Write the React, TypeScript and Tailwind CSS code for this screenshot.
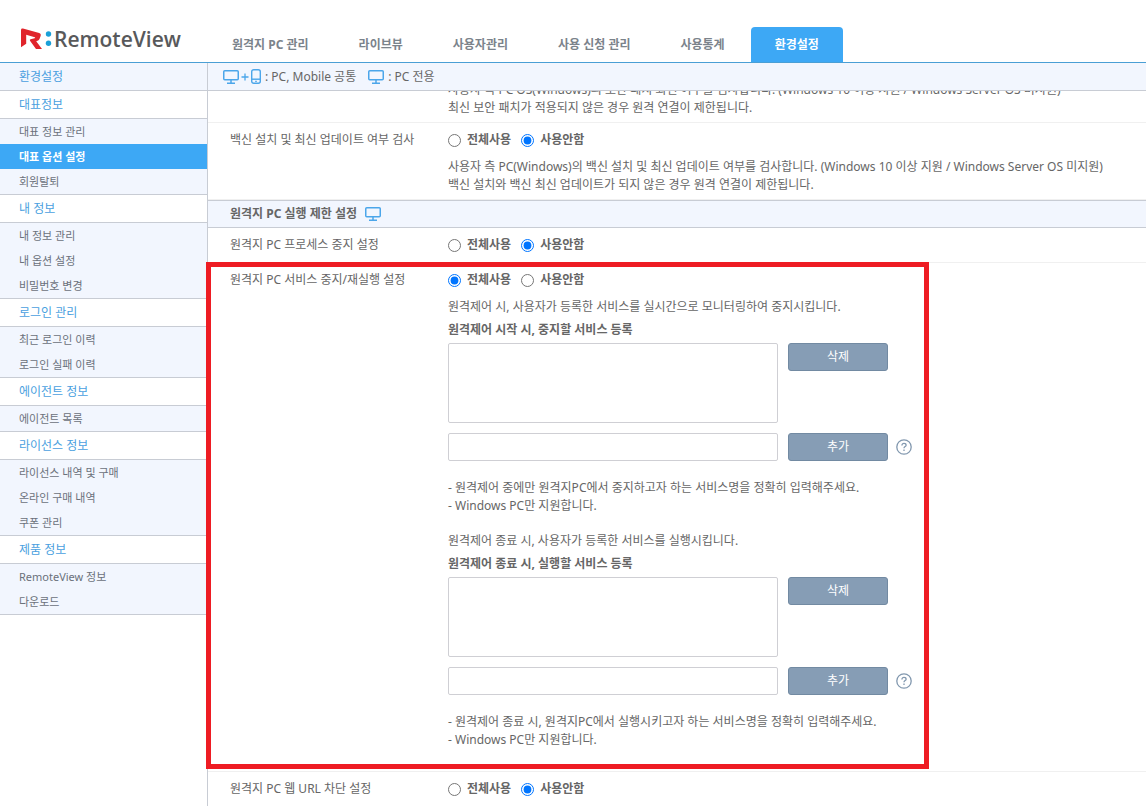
import { useState, type ReactNode } from 'react';

const navLinks = ['원격지 PC 관리', '라이브뷰', '사용자관리', '사용 신청 관리', '사용통계', '환경설정'];

const menuGroups = [
  { title: '대표정보', items: ['대표 정보 관리', '대표 옵션 설정', '회원탈퇴'] },
  { title: '내 정보', items: ['내 정보 관리', '내 옵션 설정', '비밀번호 변경'] },
  { title: '로그인 관리', items: ['최근 로그인 이력', '로그인 실패 이력'] },
  { title: '에이전트 정보', items: ['에이전트 목록'] },
  { title: '라이선스 정보', items: ['라이선스 내역 및 구매', '온라인 구매 내역', '쿠폰 관리'] },
  { title: '제품 정보', items: ['RemoteView 정보', '다운로드'] },
];

function PcIcon() {
  return (
    <svg width="16" height="14" viewBox="0 0 16 14" fill="none" stroke="#4ba6ea" strokeWidth="1.5" aria-hidden="true">
      <rect x="0.75" y="0.75" width="14.5" height="9" rx="1" />
      <path d="M8 10v3M4 13.2h8" />
    </svg>
  );
}

function MobileIcon() {
  return (
    <svg width="10" height="15" viewBox="0 0 10 15" fill="none" stroke="#4ba6ea" strokeWidth="1.4" aria-hidden="true">
      <rect x="0.7" y="0.7" width="8.6" height="13.6" rx="2" />
      <path d="M1 10.2h8" />
      <path d="M4 12.3h2" strokeWidth="1" />
    </svg>
  );
}

function Logo() {
  return (
    <a href="#home" className="flex items-center gap-0.5">
      <svg width="32" height="22" viewBox="0 0 32 22" aria-hidden="true">
        <path
          d="M1 19.3V2Q1 0.2 3 0.6L19.2 5Q21.4 5.8 20.7 7.8L19.5 11Q18.9 12.7 17 13.1L16.2 13.3L22 21H16L10 12.7Q9.4 11.5 10.6 11.2L14.6 10.3Q15.8 9.8 14.8 9.2L6.2 6.7V15.8Z"
          fill="#e0242b"
        />
        <circle cx="28.5" cy="6" r="2.7" fill="#1ba0d8" />
        <circle cx="28.5" cy="15.3" r="2.7" fill="#1ba0d8" />
      </svg>
      <span className="font-['Open_Sans'] text-[21px] leading-6 font-semibold text-[#58595b]">RemoteView</span>
    </a>
  );
}

function UseRadios({ name, initial }: { name: string; initial: 'all' | 'none' }) {
  const [value, setValue] = useState(initial);

  return (
    <div role="radiogroup" aria-label={name} className="flex items-center gap-2.5">
      <label className="flex items-center gap-1.5 font-bold text-[#666]">
        <input type="radio" name={name} checked={value === 'all'} onChange={() => setValue('all')} className="size-[13px]" />
        전체사용
      </label>
      <label className="flex items-center gap-1.5 font-bold text-[#666]">
        <input type="radio" name={name} checked={value === 'none'} onChange={() => setValue('none')} className="size-[13px]" />
        사용안함
      </label>
    </div>
  );
}

function SettingRow({ label, children }: { label: string; children: ReactNode }) {
  return (
    <div className="flex border-b border-[#f0f0f0] pl-[22px]">
      <div className="w-[218px] shrink-0 py-2">{label}</div>
      <div className="min-w-0 flex-1">{children}</div>
    </div>
  );
}

function ActionButton({ children }: { children: ReactNode }) {
  return (
    <button type="button" className="h-7 w-[100px] rounded-[3px] border border-[#728aa2] bg-[#869db5] text-white">
      {children}
    </button>
  );
}

function ServiceEditor({ id, intro, title, note }: { id: string; intro: string; title: string; note: string }) {
  return (
    <div>
      <p>{intro}</p>
      <label htmlFor={`${id}-list`} className="mt-[5px] mb-1 block font-bold text-[#666]">{title}</label>
      <div className="flex items-start gap-2.5">
        <textarea id={`${id}-list`} readOnly className="block h-20 w-[330px] resize-none rounded-xs border border-[#cfcfd4] bg-white" />
        <ActionButton>삭제</ActionButton>
      </div>
      <div className="mt-2.5 flex items-center">
        <input type="text" aria-label={title} className="mr-2.5 h-7 w-[330px] rounded-xs border border-[#cfcfd4] bg-white px-2" />
        <ActionButton>추가</ActionButton>
        <button type="button" aria-label="도움말" className="ml-2">
          <svg width="16" height="16" viewBox="0 0 16 16" fill="none" stroke="#8298af" strokeWidth="1.3" aria-hidden="true">
            <circle cx="8" cy="8" r="7.2" />
            <path d="M5.9 6.5C5.9 5 6.8 4.4 8 4.4s2.1.7 2.1 1.8C10.1 7.6 8 7.6 8 9.3" />
            <path d="M8 10.6v1.4" />
          </svg>
        </button>
      </div>
      <p className="mt-[18px]">
        {note}
        <br />- Windows PC만 지원합니다.
      </p>
    </div>
  );
}

export default function App() {
  return (
    <div className="flex h-screen flex-col overflow-hidden bg-white font-['Noto_Sans','Noto_Sans_CJK_KR',sans-serif] text-xs leading-[18px] text-[#666]">
      <header className="flex h-[63px] shrink-0 items-end border-b border-[#4a9fd5]">
        <div className="w-52 shrink-0 pb-[11px] pl-5">
          <Logo />
        </div>
        <nav className="flex gap-0.5">
          {navLinks.map((link) => (
            <a
              key={link}
              href="#menu"
              className={`flex h-[35px] items-center rounded-t px-6 font-bold whitespace-nowrap ${
                link === '환경설정' ? 'bg-[#3da8f5] text-white' : 'text-[#7b838b]'
              }`}
            >
              {link}
            </a>
          ))}
        </nav>
      </header>

      <div className="flex min-h-0 flex-1">
        <aside className="w-52 shrink-0 border-r border-[#c8ccd4]">
          <h1 className="flex h-7 items-center border-b border-[#c8ccd4] bg-[#f2f6fe] pl-[19px] text-[#4a9fe0]">환경설정</h1>
          {menuGroups.map((group) => (
            <section key={group.title}>
              <h2 className="flex h-7 items-center border-b border-[#c8ccd4] pl-[19px] text-[#4a9fe0]">{group.title}</h2>
              <ul className="border-b border-[#c8ccd4] bg-[#f2f6fe]">
                {group.items.map((item) => (
                  <li key={item}>
                    <a
                      href="#settings"
                      className={`flex h-[25px] items-center pl-[19px] text-[11px] ${
                        item === '대표 옵션 설정' ? 'bg-[#3da8f5] font-bold text-white' : 'text-[#6b717b]'
                      }`}
                    >
                      {item}
                    </a>
                  </li>
                ))}
              </ul>
            </section>
          ))}
        </aside>

        <main className="min-w-0 flex-1">
          <div className="flex h-7 items-center border-b border-[#c8ccd4] bg-[#f2f6fe] pl-[15px]">
            <PcIcon />
            <svg width="8" height="8" viewBox="0 0 8 8" stroke="#4ba6ea" strokeWidth="1.3" className="mx-0.5" aria-hidden="true">
              <path d="M4 0.5v7M0.5 4h7" />
            </svg>
            <MobileIcon />
            <span className="mr-3 ml-1">: PC, Mobile 공통</span>
            <PcIcon />
            <span className="ml-1">: PC 전용</span>
          </div>

          {/* tail of the row that is scrolled under the toolbar */}
          <div className="flex h-8 flex-col justify-end overflow-hidden border-b border-[#f0f0f0] pb-[5px] pl-60">
            <p>
              사용자 측 PC OS(Windows)의 보안 패치 최신 여부를 검사합니다. (Windows 10 이상 지원 / Windows Server OS 미지원)
              <br />
              최신 보안 패치가 적용되지 않은 경우 원격 연결이 제한됩니다.
            </p>
          </div>

          <SettingRow label="백신 설치 및 최신 업데이트 여부 검사">
            <div className="space-y-[9px] pt-2 pb-[5px]">
              <UseRadios name="vaccine" initial="none" />
              <p>
                사용자 측 PC(Windows)의 백신 설치 및 최신 업데이트 여부를 검사합니다. (Windows 10 이상 지원 / Windows Server OS 미지원)
                <br />
                백신 설치와 백신 최신 업데이트가 되지 않은 경우 원격 연결이 제한됩니다.
              </p>
            </div>
          </SettingRow>

          <h3 className="flex h-7 items-center gap-2 border-y border-[#c8ccd4] bg-[#f2f6fe] pl-[22px] font-bold">
            원격지 PC 실행 제한 설정
            <PcIcon />
          </h3>

          <SettingRow label="원격지 PC 프로세스 중지 설정">
            <div className="py-2">
              <UseRadios name="process" initial="none" />
            </div>
          </SettingRow>

          <div className="relative">
            <SettingRow label="원격지 PC 서비스 중지/재실행 설정">
              <div className="pt-2 pb-[22px]">
                <UseRadios name="service" initial="all" />
                <div className="mt-[9px] space-y-[17px]">
                  <ServiceEditor
                    id="stop"
                    intro="원격제어 시, 사용자가 등록한 서비스를 실시간으로 모니터링하여 중지시킵니다."
                    title="원격제어 시작 시, 중지할 서비스 등록"
                    note="- 원격제어 중에만 원격지PC에서 중지하고자 하는 서비스명을 정확히 입력해주세요."
                  />
                  <ServiceEditor
                    id="run"
                    intro="원격제어 종료 시, 사용자가 등록한 서비스를 실행시킵니다."
                    title="원격제어 종료 시, 실행할 서비스 등록"
                    note="- 원격제어 종료 시, 원격지PC에서 실행시키고자 하는 서비스명을 정확히 입력해주세요."
                  />
                </div>
              </div>
            </SettingRow>
            <div className="pointer-events-none absolute -top-px bottom-[3px] -left-0.5 w-[723px] border-5 border-[#ee1c23]" />
          </div>

          <SettingRow label="원격지 PC 웹 URL 차단 설정">
            <div className="py-2">
              <UseRadios name="url" initial="none" />
            </div>
          </SettingRow>
        </main>
      </div>
    </div>
  );
}
